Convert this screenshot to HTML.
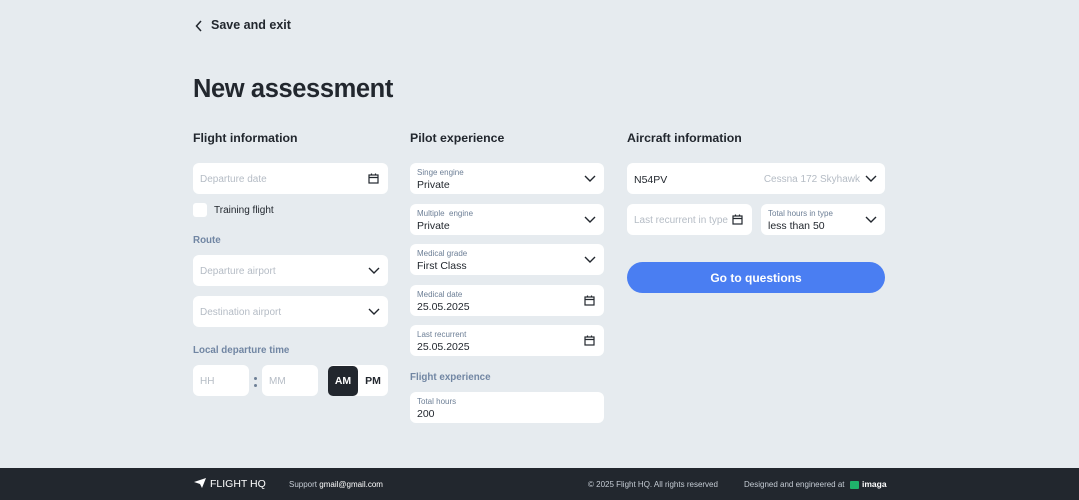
<!DOCTYPE html>
<html><head><meta charset="utf-8">
<style>
*{box-sizing:border-box;margin:0;padding:0}
body{width:1079px;height:500px;background:#e6ebef;font-family:"Liberation Sans",sans-serif;position:relative;overflow:hidden;color:#22272e}
.a{position:absolute}
.box{position:absolute;background:#fff;border-radius:6px;height:31px}
.ph{position:absolute;left:7px;top:11px;font-size:10px;color:#b5bcc5}
.lb{position:absolute;left:7px;top:5px;font-size:8px;color:#6d7f96}
.val{position:absolute;left:7px;top:16px;font-size:10.5px;color:#22272e}
.h2{position:absolute;font-size:12.3px;font-weight:bold;color:#22272e}
.h3{position:absolute;font-size:9.8px;font-weight:bold;color:#7186a3}
.ic{position:absolute;right:9px;top:10px}
.chev{position:absolute;right:8px;top:12px}
</style></head><body>
<svg class="a" style="left:195px;top:20px" width="8" height="12" viewBox="0 0 8 12"><path d="M6 1L1.5 6L6 11" fill="none" stroke="#22272e" stroke-width="1.5"/></svg>
<div class="a" style="left:211px;top:18px;font-size:12.5px;font-weight:bold">Save and exit</div>
<div class="a" style="left:193px;top:75px;font-size:25.5px;font-weight:bold;letter-spacing:-0.4px">New assessment</div>

<div class="h2" style="left:193px;top:131px">Flight information</div>
<div class="h2" style="left:410px;top:131px">Pilot experience</div>
<div class="h2" style="left:627px;top:131px">Aircraft information</div>

<!-- col1 -->
<div class="box" style="left:193px;top:163px;width:195px"><div class="ph">Departure date</div>
<svg class="ic" width="11" height="11" viewBox="0 0 11 11"><rect x="1" y="2" width="9" height="8" fill="none" stroke="#22272e" stroke-width="1.2"/><path d="M1 4.5H10M3.5 0.5V2.5M7.5 0.5V2.5" stroke="#22272e" stroke-width="1.2"/></svg></div>
<div class="a" style="left:193px;top:203px;width:14px;height:14px;background:#fff;border-radius:3px"></div>
<div class="a" style="left:214px;top:205px;font-size:10px">Training flight</div>
<div class="h3" style="left:193px;top:235px">Route</div>
<div class="box" style="left:193px;top:255px;width:195px"><div class="ph">Departure airport</div>
<svg class="chev" width="12" height="7" viewBox="0 0 12 7"><path d="M1 1L6 6L11 1" fill="none" stroke="#22272e" stroke-width="1.4"/></svg></div>
<div class="box" style="left:193px;top:296px;width:195px"><div class="ph">Destination airport</div>
<svg class="chev" width="12" height="7" viewBox="0 0 12 7"><path d="M1 1L6 6L11 1" fill="none" stroke="#22272e" stroke-width="1.4"/></svg></div>
<div class="h3" style="left:193px;top:345px">Local departure time</div>
<div class="box" style="left:193px;top:365px;width:56px"><div class="ph">HH</div></div>
<div class="a" style="left:254px;top:377px;width:3px;height:3px;background:#6d7f96;border-radius:2px"></div>
<div class="a" style="left:254px;top:384px;width:3px;height:3px;background:#6d7f96;border-radius:2px"></div>
<div class="box" style="left:262px;top:365px;width:56px"><div class="ph">MM</div></div>
<div class="box" style="left:328px;top:365px;width:60px"></div>
<div class="a" style="left:328px;top:366px;width:30px;height:30px;background:#22272e;border-radius:5px;color:#fff;font-size:10.5px;font-weight:bold;text-align:center;line-height:30px">AM</div>
<div class="a" style="left:358px;top:366px;width:30px;height:30px;color:#22272e;font-size:10.5px;font-weight:bold;text-align:center;line-height:30px">PM</div>

<!-- col2 -->
<div class="box" style="left:410px;top:163px;width:194px"><div class="lb">Singe engine</div><div class="val">Private</div>
<svg class="chev" width="12" height="7" viewBox="0 0 12 7"><path d="M1 1L6 6L11 1" fill="none" stroke="#22272e" stroke-width="1.4"/></svg></div>
<div class="box" style="left:410px;top:204px;width:194px"><div class="lb">Multiple&nbsp; engine</div><div class="val">Private</div>
<svg class="chev" width="12" height="7" viewBox="0 0 12 7"><path d="M1 1L6 6L11 1" fill="none" stroke="#22272e" stroke-width="1.4"/></svg></div>
<div class="box" style="left:410px;top:244px;width:194px"><div class="lb">Medical grade</div><div class="val">First Class</div>
<svg class="chev" width="12" height="7" viewBox="0 0 12 7"><path d="M1 1L6 6L11 1" fill="none" stroke="#22272e" stroke-width="1.4"/></svg></div>
<div class="box" style="left:410px;top:285px;width:194px"><div class="lb">Medical date</div><div class="val">25.05.2025</div>
<svg class="ic" width="11" height="11" viewBox="0 0 11 11"><rect x="1" y="2" width="9" height="8" fill="none" stroke="#22272e" stroke-width="1.2"/><path d="M1 4.5H10M3.5 0.5V2.5M7.5 0.5V2.5" stroke="#22272e" stroke-width="1.2"/></svg></div>
<div class="box" style="left:410px;top:325px;width:194px"><div class="lb">Last recurrent</div><div class="val">25.05.2025</div>
<svg class="ic" width="11" height="11" viewBox="0 0 11 11"><rect x="1" y="2" width="9" height="8" fill="none" stroke="#22272e" stroke-width="1.2"/><path d="M1 4.5H10M3.5 0.5V2.5M7.5 0.5V2.5" stroke="#22272e" stroke-width="1.2"/></svg></div>
<div class="h3" style="left:410px;top:372px">Flight experience</div>
<div class="box" style="left:410px;top:392px;width:194px"><div class="lb">Total hours</div><div class="val">200</div></div>

<!-- col3 -->
<div class="box" style="left:627px;top:163px;width:258px"><div class="a" style="left:7px;top:11px;font-size:10.5px">N54PV</div>
<div class="a" style="right:25px;top:11px;font-size:10px;color:#b5bcc5">Cessna 172 Skyhawk</div>
<svg class="chev" width="12" height="7" viewBox="0 0 12 7"><path d="M1 1L6 6L11 1" fill="none" stroke="#22272e" stroke-width="1.4"/></svg></div>
<div class="box" style="left:627px;top:204px;width:125px"><div class="ph">Last recurrent in type</div>
<svg class="ic" width="11" height="11" viewBox="0 0 11 11"><rect x="1" y="2" width="9" height="8" fill="none" stroke="#22272e" stroke-width="1.2"/><path d="M1 4.5H10M3.5 0.5V2.5M7.5 0.5V2.5" stroke="#22272e" stroke-width="1.2"/></svg></div>
<div class="box" style="left:761px;top:204px;width:124px"><div class="lb">Total hours in type</div><div class="val">less than 50</div>
<svg class="chev" width="12" height="7" viewBox="0 0 12 7"><path d="M1 1L6 6L11 1" fill="none" stroke="#22272e" stroke-width="1.4"/></svg></div>
<div class="a" style="left:627px;top:262px;width:258px;height:31px;background:#4a7ef2;border-radius:16px;color:#fff;font-size:12px;font-weight:bold;text-align:center;line-height:32px">Go to questions</div>

<!-- footer -->
<div class="a" style="left:0;top:468px;width:1079px;height:32px;background:#22272e"></div>
<svg class="a" style="left:194px;top:478px" width="12" height="10" viewBox="0 0 12 10"><path d="M0 4L12 0L8 10L6 6Z" fill="#fff"/></svg>
<div class="a" style="left:210px;top:478px;font-size:10.5px;color:#fff">FLIGHT HQ</div>
<div class="a" style="left:289px;top:480px;font-size:8px;color:#c5ccd4">Support <span style="color:#fff">gmail@gmail.com</span></div>
<div class="a" style="left:588px;top:480px;font-size:8px;color:#c5ccd4">© 2025 Flight HQ. All rights reserved</div>
<div class="a" style="left:744px;top:480px;font-size:8px;color:#c5ccd4">Designed and engineered at</div>
<div class="a" style="left:850px;top:481px;width:9px;height:8px;background:#1fb26b;border-radius:1px"></div>
<div class="a" style="left:862px;top:479px;font-size:8.5px;font-weight:bold;color:#fff">imaga</div>
</body></html>
